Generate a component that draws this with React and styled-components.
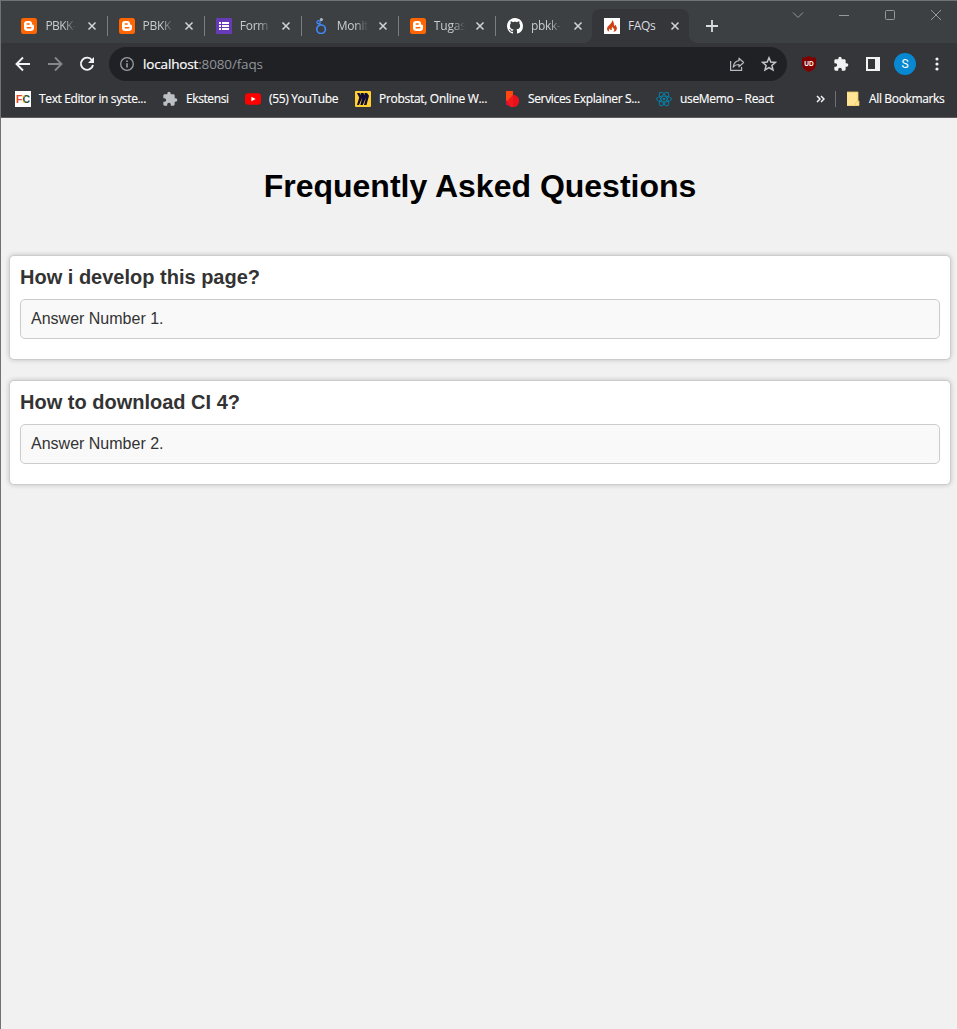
import React from "react";
import styled, { createGlobalStyle } from "styled-components";

const GlobalStyle = createGlobalStyle`
  * { box-sizing: border-box; }
  body { margin: 0; background: #f1f1f1; }
`;

const Window = styled.div`
  width: 957px;
  height: 1029px;
  overflow: hidden;
  display: flex;
  flex-direction: column;
  border-left: 1px solid #727272;
  border-top: 1px solid #727272;
  background: #f1f1f1;
  font-family: "Open Sans", "Noto Sans", sans-serif;
  svg { display: block; flex: none; }
`;

const TabStrip = styled.div`
  height: 42px;
  background: #3c4043;
  display: flex;
  padding: 8px 0 0 8.46px;
`;

const Tab = styled.div`
  position: relative;
  width: 97.1px;
  height: 34px;
  flex: none;
  display: flex;
  align-items: center;
  padding-left: 12px;
  background: ${(p) => (p.$active ? "#35363a" : "transparent")};
  border-radius: 8px 8px 0 0;
  &::before, &::after {
    content: "";
    display: ${(p) => (p.$active ? "block" : "none")};
    position: absolute;
    bottom: 0;
    width: 8px;
    height: 8px;
  }
  &::before { left: -8px; background: radial-gradient(circle at 0 0, transparent 7.5px, #35363a 8px); }
  &::after { right: -8px; background: radial-gradient(circle at 100% 0, transparent 7.5px, #35363a 8px); }
`;

const TabDivider = styled.span`
  position: absolute;
  left: 0.4px;
  top: 7px;
  width: 1px;
  height: 20px;
  background: #7b7e81;
`;

const TabTitle = styled.span`
  width: 31px;
  margin-left: 8px;
  overflow: hidden;
  white-space: nowrap;
  font-size: 12px;
  line-height: 18px;
  letter-spacing: ${(p) => p.$spacing || 0}px;
  color: ${(p) => (p.$fade ? "#c8cbce" : "#dadce0")};
  mask-image: ${(p) => (p.$fade ? "linear-gradient(90deg, #000 60%, transparent 100%)" : "none")};
`;

const CloseSlot = styled.span`
  margin-left: 10.6px;
`;

const NewTab = styled.div`
  width: 28px;
  height: 34px;
  margin-left: 8.6px;
  display: grid;
  place-items: center;
`;

const WindowControls = styled.div`
  display: flex;
  gap: 30px;
  margin: -2px 0 0 auto;
  padding-right: 13px;
`;

const Toolbar = styled.div`
  height: 42px;
  background: #35363a;
  display: flex;
  align-items: center;
  padding-left: 14px;
  gap: 16px;
`;

const NavButtons = styled.div`
  display: flex;
  gap: 16px;
`;

const AddressBar = styled.div`
  width: 678px;
  height: 34px;
  margin-left: -2px;
  border-radius: 17px;
  background: #202124;
  display: flex;
  align-items: center;
  padding: 0 10px;
`;

const Address = styled.span`
  flex: 1;
  margin-left: 8px;
  font-size: 13.5px;
  line-height: 20px;
  color: #90949a;
  letter-spacing: ${(p) => p.$spacing}px;
  b { font-weight: 400; color: #fff; -webkit-text-stroke: 0.2px #fff; }
`;

const AddressActions = styled.div`
  display: flex;
  gap: 16px;
`;

const Extensions = styled.div`
  display: flex;
  align-items: center;
  gap: 16px;
  margin-left: -2px;
`;

const Avatar = styled.span`
  width: 22px;
  height: 22px;
  margin: 0 -3px;
  border-radius: 50%;
  background: #0788d1;
  color: #fff;
  font: 12px/22px Roboto, sans-serif;
  text-align: center;
`;

const BookmarksBar = styled.div`
  height: 33px;
  background: #35363a;
  border-bottom: 1px solid #5d5a60;
  display: flex;
  align-items: center;
  padding: 0 0 5px 14px;
`;

const Bookmark = styled.div`
  display: flex;
  align-items: center;
  flex: none;
  gap: ${(p) => p.$gap || 8}px;
  margin-right: ${(p) => p.$after}px;
`;

const BookmarkLabel = styled.span`
  width: ${(p) => p.$width}px;
  white-space: nowrap;
  font-size: 12px;
  line-height: 18px;
  letter-spacing: ${(p) => p.$spacing || 0}px;
  color: #fff;
  -webkit-text-stroke: 0.15px #fff;
`;

const BarDivider = styled.span`
  width: 1px;
  height: 16px;
  background: #6d7074;
  margin: 0 10px 0 10px;
`;

const Page = styled.main`
  flex: 1;
  padding: 50px 6px 0 8px;
  font-family: Arial, "Liberation Sans", sans-serif;
  color: #333;
`;

const Title = styled.h1`
  margin: 0 0 50px;
  font-size: 32px;
  line-height: 37px;
  color: #000;
  text-align: center;
`;

const Card = styled.section`
  height: 105px;
  margin-bottom: 20px;
  padding: 10px;
  background: #fff;
  border: 1px solid #ccc;
  border-radius: 5px;
  box-shadow: 0 0 5px rgba(0, 0, 0, 0.2);
`;

const Question = styled.h2`
  margin: 0 0 10px;
  font-size: 20px;
  line-height: 23px;
`;

const Answer = styled.div`
  height: 40px;
  padding: 10px;
  font-size: 16px;
  line-height: 18px;
  background: #f9f9f9;
  border: 1px solid #ccc;
  border-radius: 5px;
`;

const Blogger = () => (
  <svg width="16" height="16" viewBox="0 0 16 16">
    <rect width="16" height="16" rx="2.5" fill="#ff6500" />
    <path d="M6 3h2.4a2.6 2.6 0 0 1 2.6 2.6c0 .9.4 1.2 1.1 1.2.6 0 .9.3.9.9v2.1A3.2 3.2 0 0 1 9.8 13H6.2A3.2 3.2 0 0 1 3 9.8V6a3 3 0 0 1 3-3Z" fill="#fff" />
    <path d="M6.2 6h2M6.2 9.8h3.6" stroke="#ff6500" strokeWidth="1.4" strokeLinecap="round" />
  </svg>
);

const Forms = () => (
  <svg width="16" height="16" viewBox="0 0 16 16">
    <rect width="16" height="16" rx="1" fill="#673ab7" />
    <path d="M3 4h2v2H3zM6 4h7v2H6zM3 7h2v2H3zM6 7h7v2H6zM3 10h2v2H3zM6 10h7v2H6z" fill="#fff" />
  </svg>
);

const Looker = () => (
  <svg width="16" height="16" viewBox="-1 0 16 16" fill="none">
    <circle cx="7.1" cy="11.2" r="4.3" stroke="#4285f4" strokeWidth="1.7" />
    <circle cx="4.6" cy="4.2" r="1.6" stroke="#4285f4" strokeWidth="1.4" />
    <path d="m5.4 5.4.8 1.7" stroke="#4285f4" strokeWidth="1.3" />
    <circle cx="7.4" cy="1.6" r="1.1" fill="#a6b2c6" stroke="#c3cad6" />
  </svg>
);

const GitHub = () => (
  <svg width="16" height="16" viewBox="0 0 16 16" fill="#fff">
    <path d="M8 0C3.58 0 0 3.58 0 8c0 3.54 2.29 6.53 5.47 7.59.4.07.55-.17.55-.38 0-.19-.01-.82-.01-1.49-2.01.37-2.53-.49-2.69-.94-.09-.23-.48-.94-.82-1.13-.28-.15-.68-.52-.01-.53.63-.01 1.08.58 1.23.82.72 1.21 1.87.87 2.33.66.07-.52.28-.87.51-1.07-1.78-.2-3.64-.89-3.64-3.95 0-.87.31-1.59.82-2.15-.08-.2-.36-1.02.08-2.12 0 0 .67-.21 2.2.82.64-.18 1.32-.27 2-.27s1.36.09 2 .27c1.53-1.04 2.2-.82 2.2-.82.44 1.1.16 1.92.08 2.12.51.56.82 1.27.82 2.15 0 3.07-1.87 3.75-3.65 3.95.29.25.54.73.54 1.48 0 1.07-.01 1.93-.01 2.2 0 .21.15.46.55.38A8.01 8.01 0 0 0 16 8c0-4.42-3.58-8-8-8Z" />
  </svg>
);

const CodeIgniter = () => (
  <svg width="16" height="16" viewBox="0 0 16 16">
    <rect width="16" height="16" fill="#fff" />
    <path d="M8 2c.5 1.6-.4 2.5-1.8 3.9C4.7 7.5 3 8.900 3 10.700c0 1.500 1 2.600 2.600 3.100-1-.9-.9-2.200.4-3.200-.1.900.2 1.400.8 1.500.8.100 1.200-.5 1-1.200-.2-.8-.1-1.300.5-1.900 0 .9 2 1.400 2 3 0 .8-.4 1.400-1.100 1.900 2.100-.3 3.700-1.500 3.700-3.500 0-1.600-1.200-2.600-1.700-3.800-.3.800-.2 1.300-.8 1.500C9.800 6.900 10.400 3.800 8 2Z" fill="#cf4213" />
  </svg>
);

const TabClose = () => (
  <svg width="10" height="10" viewBox="0 0 10 10">
    <path d="m1.500 1.500 7 7m0-7-7 7" stroke="#d2d5d8" strokeWidth="1.500" />
  </svg>
);

const Plus = () => (
  <svg width="12" height="12" viewBox="0 0 12 12">
    <path d="M6 0v12M0 6h12" stroke="#dadce0" strokeWidth="1.800" />
  </svg>
);

const Control = ({ d }) => (
  <svg width="16" height="16" viewBox="0 0 16 16" fill="none" stroke="#96989a">
    <path d={d} />
  </svg>
);

const Arrow = ({ color, flip }) => (
  <svg width="16" height="16" viewBox="0 0 16 16" fill="none" stroke={color} strokeWidth="1.900">
    <path d={flip ? "M1 8h13M8 1.500 14.500 8 8 14.500" : "M15 8H2M8 1.500 1.500 8 8 14.500"} />
  </svg>
);

const Reload = () => (
  <svg width="16" height="16" viewBox="0 0 16 16">
    <path d="M13 4.200A6.100 6.100 0 1 0 14 9" fill="none" stroke="#f1f3f4" strokeWidth="1.900" />
    <path d="M15 1v6H9z" fill="#f1f3f4" />
  </svg>
);

const Info = () => (
  <svg width="16" height="16" viewBox="0 0 16 16">
    <circle cx="8" cy="8" r="6.300" fill="none" stroke="#9aa0a6" strokeWidth="1.300" />
    <path d="M7.200 4.500h1.600v1.500H7.200zM7.200 7.200h1.600v4.300H7.200z" fill="#9aa0a6" />
  </svg>
);

const Share = () => (
  <svg width="16" height="16" viewBox="0 0 16 16" fill="none" stroke="#b7bbc0" strokeWidth="1.200">
    <path d="M1.600 5v9.400h11v-3.400" />
    <path d="M10 2.200 14.600 6.500 10 10.800V8.500C7.400 8.400 5.700 9.200 4.200 11 4.700 7.500 6.700 5 10 4.600Z" strokeLinejoin="round" />
  </svg>
);

const Star = () => (
  <svg width="16" height="16" viewBox="0 0 16 16">
    <path d="m8 1.800 1.800 4.200 4.600.4-3.500 3 1.100 4.500L8 11.500l-4 2.400 1.100-4.500-3.500-3 4.600-.4Z" fill="none" stroke="#c4c7ca" strokeWidth="1.500" />
  </svg>
);

const ShieldText = styled.text`
  font: bold 6.5px "Liberation Sans", sans-serif;
`;

const Shield = () => (
  <svg width="16" height="16" viewBox="0 0 16 16">
    <path d="M8 0c2 1.300 4.200 1.700 7 1.700V8c0 3.700-3 6.200-7 8-4-1.800-7-4.300-7-8V1.700C3.800 1.700 6 1.300 8 0Z" fill="#800000" />
    <ShieldText x="8" y="9.800" textAnchor="middle" fill="#fff">UD</ShieldText>
  </svg>
);

const Puzzle = ({ color }) => (
  <svg width="16" height="16" viewBox="0 0 24 24" fill={color}>
    <path d="M20.500 11H19V7c0-1.100-.9-2-2-2h-4V3.500a2.500 2.500 0 0 0-5 0V5H4c-1.100 0-1.990.9-1.990 2v3.800H3.500c1.490 0 2.700 1.210 2.700 2.700s-1.210 2.700-2.700 2.700H2V20c0 1.100.9 2 2 2h3.800v-1.500c0-1.490 1.210-2.700 2.700-2.700s2.700 1.210 2.700 2.700V22H17c1.100 0 2-.9 2-2v-4h1.500a2.500 2.500 0 0 0 0-5Z" />
  </svg>
);

const SidePanel = () => (
  <svg width="16" height="16" viewBox="0 0 16 16">
    <path d="M1 1h14v14H1zM3 3v10h7V3z" fill="#f1f3f4" fillRule="evenodd" />
  </svg>
);

const Dots = () => (
  <svg width="16" height="16" viewBox="0 0 16 16" fill="#f1f3f4">
    <circle cx="8" cy="3" r="1.600" />
    <circle cx="8" cy="8" r="1.600" />
    <circle cx="8" cy="13" r="1.600" />
  </svg>
);

const FcText = styled.text`
  font: bold 10.5px "Liberation Sans", sans-serif;
`;

const FcIcon = () => (
  <svg width="16" height="16" viewBox="0 0 16 16">
    <rect width="16" height="16" fill="#fff" />
    <FcText x="1" y="11.700" fill="#e2452c">F</FcText>
    <FcText x="7.500" y="11.700" fill="#294c2f">C</FcText>
    <path d="M8 6 10 4.500M8 10l1.500 1.500" stroke="#f2b322" strokeWidth="1.300" />
  </svg>
);

const YouTube = () => (
  <svg width="16" height="16" viewBox="0 0 16 16">
    <rect y="2.300" width="16" height="11.400" rx="3" fill="#f00" />
    <path d="m6.400 5.700 4.200 2.300-4.200 2.300Z" fill="#fff" />
  </svg>
);

const Miro = () => (
  <svg width="16" height="16" viewBox="0 0 16 16">
    <rect width="16" height="16" rx="1" fill="#ffd02f" />
    <path d="M2 2h2.500L6 4.200 5.600 2h2.800l1.400 2.200L9.500 2H12l2 2.800L11.500 14H9l2-7.500L7.800 14H5.300l2-7.500L4 14H2l2.200-7.500Z" fill="#110d36" />
  </svg>
);

const Services = () => (
  <svg width="16" height="16" viewBox="0 0 16 16">
    <path d="M2 0h7v16H8L2 13Z" fill="#ff4713" />
    <path d="M3 10 9 4a6 6 0 0 1 0 12q-4 0-7-3.500Z" fill="#f01a1a" />
    <path d="M9 4a6 6 0 0 1 0 12Z" fill="#e8101e" />
    <path d="M2 9v4.500l5 2.200Z" fill="#d6123c" />
  </svg>
);

const ReactLogo = () => (
  <svg width="16" height="16" viewBox="0 0 16 16" fill="none" stroke="#087ea4" strokeWidth="1">
    <ellipse cx="8" cy="8" rx="7.500" ry="2.900" />
    <ellipse cx="8" cy="8" rx="7.500" ry="2.900" transform="rotate(60 8 8)" />
    <ellipse cx="8" cy="8" rx="7.500" ry="2.900" transform="rotate(120 8 8)" />
    <circle cx="8" cy="8" r="1.300" fill="#087ea4" stroke="none" />
  </svg>
);

const Chevrons = () => (
  <svg width="9" height="8" viewBox="0 0 9 8" fill="none" stroke="#f1f3f4" strokeWidth="1.500">
    <path d="m1 1 3 3-3 3M5 1l3 3-3 3" />
  </svg>
);

const Folder = () => (
  <svg width="14" height="16" viewBox="0 0 14 16">
    <path d="M1 1h11v9h1v5H1Z" fill="#ffe594" />
    <path d="M1 1h11v9h1v4.500H9.500V12l2.500-2" fill="none" stroke="#e9c860" strokeWidth=".8" />
    <path d="M1 14.500h9" stroke="#f2d57a" />
  </svg>
);

const tabs = [
  { icon: Blogger, title: "PBKK-", spacing: -0.55 },
  { icon: Blogger, title: "PBKK", spacing: -0.3 },
  { icon: Forms, title: "Form" },
  { icon: Looker, title: "Monit" },
  { icon: Blogger, title: "Tugas" },
  { icon: GitHub, title: "pbkk-", spacing: -0.3 },
  { icon: CodeIgniter, title: "FAQs", active: true, spacing: -0.35 },
];

const bookmarks = [
  { icon: <FcIcon />, label: "Text Editor in syste...", width: 107, after: 16, spacing: -0.35 },
  { icon: <Puzzle color="#bdc1c6" />, label: "Ekstensi", width: 43, after: 16, spacing: -0.4 },
  { icon: <YouTube />, label: "(55) YouTube", width: 70, after: 16, spacing: -0.35 },
  { icon: <Miro />, label: "Probstat, Online W...", width: 109, after: 16, spacing: -0.3 },
  { icon: <Services />, label: "Services Explainer S...", width: 112, after: 16, spacing: -0.35 },
  { icon: <ReactLogo />, label: "useMemo – React", width: 95, after: 41, spacing: -0.33 },
];

const faqs = [
  { question: "How i develop this page?", answer: "Answer Number 1." },
  { question: "How to download CI 4?", answer: "Answer Number 2." },
];

export default function App() {
  return (
    <Window>
      <GlobalStyle />
      <TabStrip>
        {tabs.map(({ icon: Icon, title, active, spacing = -0.2 }, i) => (
          <Tab key={i} $active={active}>
            {i > 0 && !active && <TabDivider />}
            <Icon />
            <TabTitle $fade={!active} $spacing={spacing}>{title}</TabTitle>
            <CloseSlot><TabClose /></CloseSlot>
          </Tab>
        ))}
        <NewTab><Plus /></NewTab>
        <WindowControls>
          <Control d="m3 5.500 5 5 5-5" />
          <Control d="M3 8.500h10" />
          <Control d="M4.500 3.500h7a1 1 0 0 1 1 1v7a1 1 0 0 1-1 1h-7a1 1 0 0 1-1-1v-7a1 1 0 0 1 1-1Z" />
          <Control d="m3 3 10 10M13 3 3 13" />
        </WindowControls>
      </TabStrip>
      <Toolbar>
        <NavButtons>
          <Arrow color="#f1f3f4" />
          <Arrow color="#85878a" flip />
          <Reload />
        </NavButtons>
        <AddressBar>
          <Info />
          <Address $spacing={-0.15}><b>localhost</b>:8080/faqs</Address>
          <AddressActions>
            <Share />
            <Star />
          </AddressActions>
        </AddressBar>
        <Extensions>
          <Shield />
          <Puzzle color="#f1f3f4" />
          <SidePanel />
          <Avatar>S</Avatar>
          <Dots />
        </Extensions>
      </Toolbar>
      <BookmarksBar>
        {bookmarks.map((b) => (
          <Bookmark key={b.label} $after={b.after}>
            {b.icon}
            <BookmarkLabel $width={b.width} $spacing={b.spacing}>{b.label}</BookmarkLabel>
          </Bookmark>
        ))}
        <Chevrons />
        <BarDivider />
        <Bookmark $after={0} $gap={9}>
          <Folder />
          <BookmarkLabel $width={76} $spacing={-0.35}>All Bookmarks</BookmarkLabel>
        </Bookmark>
      </BookmarksBar>
      <Page>
        <Title>Frequently Asked Questions</Title>
        {faqs.map((f) => (
          <Card key={f.question}>
            <Question>{f.question}</Question>
            <Answer>{f.answer}</Answer>
          </Card>
        ))}
      </Page>
    </Window>
  );
}
